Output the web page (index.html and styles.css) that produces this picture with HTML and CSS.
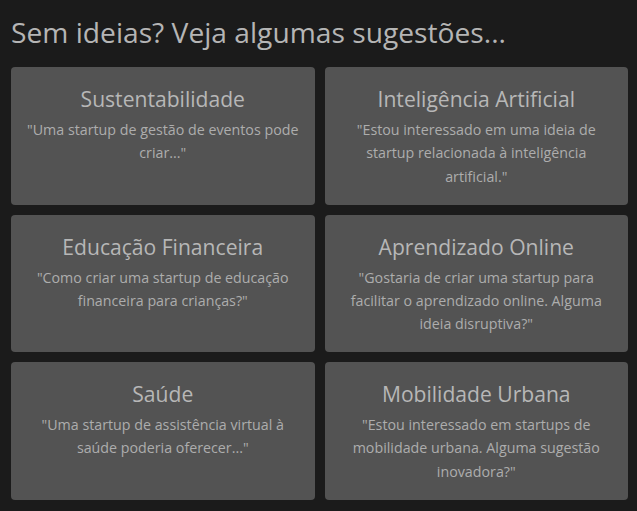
FILE: index.html
```html
<!DOCTYPE html>
<html lang="pt">
<head>
<meta charset="utf-8">
<link rel="stylesheet" href="styles.css">
</head>
<body>
<main class="page">
  <h2 class="heading">Sem ideias? Veja algumas sugestões...</h2>
  <div class="grid">
    <div class="card">
      <h3 class="card-title">Sustentabilidade</h3>
      <p class="card-text">"Uma startup de gestão de eventos pode criar..."</p>
    </div>
    <div class="card">
      <h3 class="card-title">Inteligência Artificial</h3>
      <p class="card-text">"Estou interessado em uma ideia de startup relacionada à inteligência artificial."</p>
    </div>
    <div class="card">
      <h3 class="card-title">Educação Financeira</h3>
      <p class="card-text">"Como criar uma startup de educação financeira para crianças?"</p>
    </div>
    <div class="card">
      <h3 class="card-title">Aprendizado Online</h3>
      <p class="card-text">"Gostaria de criar uma startup para facilitar o aprendizado online. Alguma ideia disruptiva?"</p>
    </div>
    <div class="card">
      <h3 class="card-title">Saúde</h3>
      <p class="card-text">"Uma startup de assistência virtual à saúde poderia oferecer..."</p>
    </div>
    <div class="card">
      <h3 class="card-title">Mobilidade Urbana</h3>
      <p class="card-text">"Estou interessado em startups de mobilidade urbana. Alguma sugestão inovadora?"</p>
    </div>
  </div>
</main>
</body>
</html>
```
FILE: styles.css
```css
html, body {
  margin: 0;
  padding: 0;
  background: #1b1b1b;
}
body {
  font-family: "Open Sans", "Noto Sans", sans-serif;
  color: #b0b0b0;
}
.page {
  padding: 14px 9px 0 11px;
}
.heading {
  margin: 0 0 17px 0;
  font-size: 28.2px;
  font-weight: 400;
  line-height: 36px;
  color: #b5b5b5;
}
.grid {
  display: grid;
  grid-template-columns: 1fr 1fr;
  gap: 10px;
}
.card {
  background: #535353;
  border-radius: 4px;
  padding: 19px 16px 15px;
  text-align: center;
  min-height: 103.5px;
}
.card-title {
  margin: 0 0 6px 0;
  font-size: 21.1px;
  font-weight: 400;
  line-height: 26px;
  color: #b7b7b7;
}
.card-text {
  margin: 0;
  font-size: 14.25px;
  line-height: 23.3px;
  color: #adadad;
}
```
